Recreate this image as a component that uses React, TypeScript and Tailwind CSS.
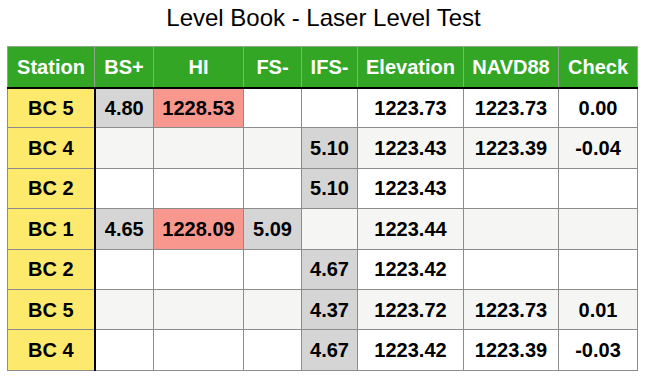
import React from 'react';

type Cell = { v: string; bg?: 'gray' | 'red' };

const HEADERS = ['Station', 'BS+', 'HI', 'FS-', 'IFS-', 'Elevation', 'NAVD88', 'Check'];
const WIDTHS = [87, 59, 90, 58, 56, 106, 95, 79];

const ROWS: Cell[][] = [
  [{ v: 'BC 5' }, { v: '4.80', bg: 'gray' }, { v: '1228.53', bg: 'red' }, { v: '' }, { v: '' }, { v: '1223.73' }, { v: '1223.73' }, { v: '0.00' }],
  [{ v: 'BC 4' }, { v: '' }, { v: '' }, { v: '' }, { v: '5.10', bg: 'gray' }, { v: '1223.43' }, { v: '1223.39' }, { v: '-0.04' }],
  [{ v: 'BC 2' }, { v: '' }, { v: '' }, { v: '' }, { v: '5.10', bg: 'gray' }, { v: '1223.43' }, { v: '' }, { v: '' }],
  [{ v: 'BC 1' }, { v: '4.65', bg: 'gray' }, { v: '1228.09', bg: 'red' }, { v: '5.09', bg: 'gray' }, { v: '' }, { v: '1223.44' }, { v: '' }, { v: '' }],
  [{ v: 'BC 2' }, { v: '' }, { v: '' }, { v: '' }, { v: '4.67', bg: 'gray' }, { v: '1223.42' }, { v: '' }, { v: '' }],
  [{ v: 'BC 5' }, { v: '' }, { v: '' }, { v: '' }, { v: '4.37', bg: 'gray' }, { v: '1223.72' }, { v: '1223.73' }, { v: '0.01' }],
  [{ v: 'BC 4' }, { v: '' }, { v: '' }, { v: '' }, { v: '4.67', bg: 'gray' }, { v: '1223.42' }, { v: '1223.39' }, { v: '-0.03' }],
];

export default function App() {
  return (
    <div className="w-[647px] h-[382px] bg-white font-['Liberation_Sans',Arial,sans-serif] text-black">
      <h1 className="h-[46px] pt-[3px] text-center text-[24px] leading-[30px]">Level Book - Laser Level Test</h1>
      <table className="ml-[7px] table-fixed border-collapse border border-[#a8a8a8]">
        <colgroup>
          {WIDTHS.map((w, i) => (
            <col key={i} style={{ width: w }} />
          ))}
        </colgroup>
        <thead>
          <tr className="h-[41px] bg-[#33a626]">
            {HEADERS.map((h) => (
              <th
                key={h}
                className="border border-[#8fa88a] border-b-2 border-b-black p-0 text-center text-[20px] font-bold text-white"
              >
                {h}
              </th>
            ))}
          </tr>
        </thead>
        <tbody>
          {ROWS.map((row, r) => (
            <tr key={r} className={`h-[40.4px] ${r % 2 === 1 ? 'bg-[#f5f5f3]' : 'bg-white'}`}>
              {row.map((c, i) => (
                <td
                  key={i}
                  className={`border border-[#8c8c8c] p-0 text-center text-[20px] font-bold ${
                    i === 0 ? 'bg-[#fde96b] border-r-2 border-r-black' : ''
                  } ${c.bg === 'gray' ? 'bg-[#d5d5d5]' : ''} ${c.bg === 'red' ? 'bg-[#f8978d]' : ''}`}
                >
                  {c.v}
                </td>
              ))}
            </tr>
          ))}
        </tbody>
      </table>
    </div>
  );
}
